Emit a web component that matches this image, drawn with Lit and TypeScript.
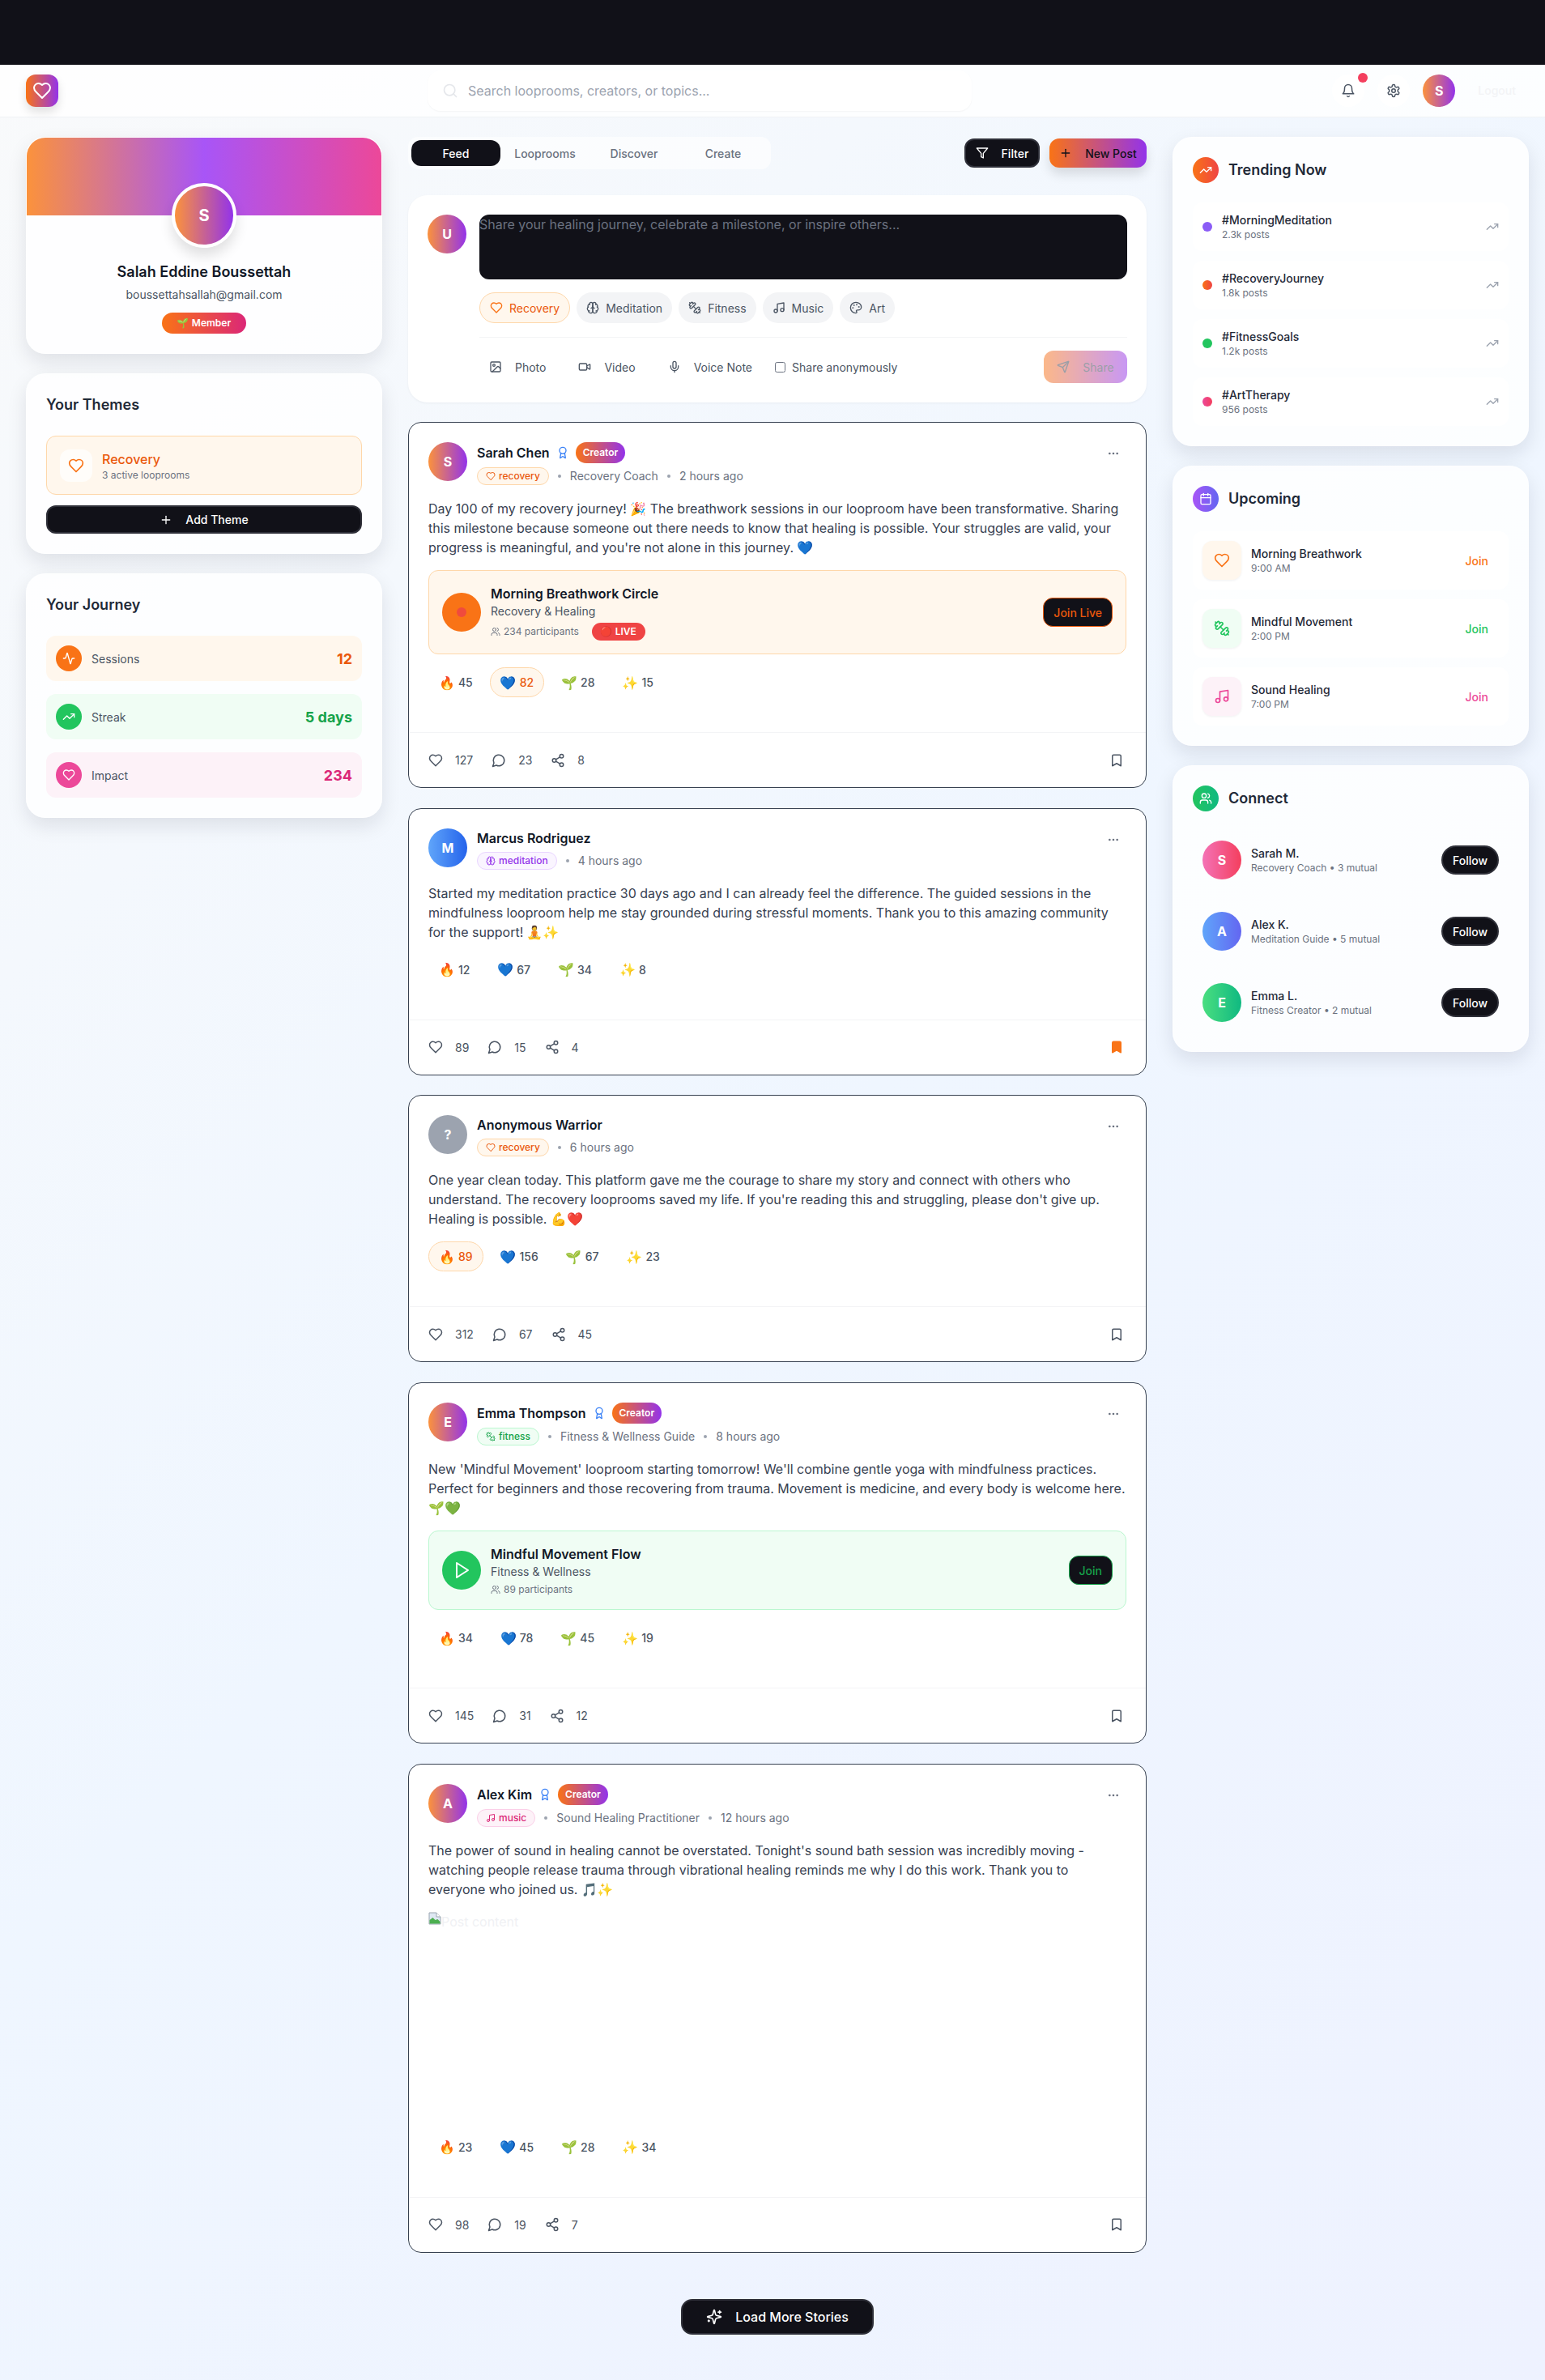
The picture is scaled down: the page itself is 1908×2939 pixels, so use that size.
import { LitElement, html, css, svg } from "lit";
import { customElement } from "lit/decorators.js";

const ICONS: Record<string, unknown> = {
  heart: svg`<path d="M19 14c1.49-1.46 3-3.21 3-5.5A5.5 5.5 0 0 0 16.5 3c-1.76 0-3 .5-4.5 2-1.5-1.5-2.74-2-4.5-2A5.5 5.5 0 0 0 2 8.5c0 2.3 1.5 4.05 3 5.5l7 7Z"/>`,
  brain: svg`<path d="M12 5a3 3 0 1 0-5.997.125 4 4 0 0 0-2.526 5.77 4 4 0 0 0 .556 6.588A4 4 0 1 0 12 18Z"/><path d="M12 5a3 3 0 1 1 5.997.125 4 4 0 0 1 2.526 5.77 4 4 0 0 1-.556 6.588A4 4 0 1 1 12 18Z"/><path d="M15 13a4.5 4.5 0 0 1-3-4 4.5 4.5 0 0 1-3 4"/><path d="M17.599 6.5a3 3 0 0 0 .399-1.375"/><path d="M6.003 5.125A3 3 0 0 0 6.401 6.5"/><path d="M3.477 10.896a4 4 0 0 1 .585-.396"/><path d="M19.938 10.5a4 4 0 0 1 .585.396"/><path d="M6 18a4 4 0 0 1-1.967-.516"/><path d="M19.967 17.484A4 4 0 0 1 18 18"/>`,
  dumbbell: svg`<path d="M14.4 14.4 9.6 9.6"/><path d="M18.657 21.485a2 2 0 1 1-2.829-2.828l-1.767 1.768a2 2 0 1 1-2.829-2.829l6.364-6.364a2 2 0 1 1 2.829 2.829l-1.768 1.767a2 2 0 1 1 2.828 2.829z"/><path d="m21.5 21.5-1.4-1.4"/><path d="M3.9 3.9 2.5 2.5"/><path d="M6.404 12.768a2 2 0 1 1-2.829-2.829l1.768-1.767a2 2 0 1 1-2.828-2.829l2.828-2.828a2 2 0 1 1 2.829 2.828l1.767-1.768a2 2 0 1 1 2.829 2.829z"/>`,
  music: svg`<path d="M9 18V5l12-2v13"/><circle cx="6" cy="18" r="3"/><circle cx="18" cy="16" r="3"/>`,
  palette: svg`<circle cx="13.5" cy="6.5" r=".5"/><circle cx="17.5" cy="10.5" r=".5"/><circle cx="8.5" cy="7.5" r=".5"/><circle cx="6.5" cy="12.5" r=".5"/><path d="M12 2C6.5 2 2 6.5 2 12s4.5 10 10 10c.926 0 1.648-.746 1.648-1.688 0-.437-.18-.835-.437-1.125-.29-.289-.438-.652-.438-1.125a1.64 1.64 0 0 1 1.668-1.668h1.996c3.051 0 5.555-2.503 5.555-5.554C21.965 6.012 17.461 2 12 2z"/>`,
  image: svg`<rect x="3" y="3" width="18" height="18" rx="2"/><circle cx="9" cy="9" r="2"/><path d="m21 15-3.086-3.086a2 2 0 0 0-2.828 0L6 21"/>`,
  video: svg`<path d="m16 13 5.223 3.482a.5.5 0 0 0 .777-.416V7.87a.5.5 0 0 0-.752-.432L16 10.5"/><rect x="2" y="6" width="14" height="12" rx="2"/>`,
  mic: svg`<path d="M12 2a3 3 0 0 0-3 3v7a3 3 0 0 0 6 0V5a3 3 0 0 0-3-3Z"/><path d="M19 10v2a7 7 0 0 1-14 0v-2"/><path d="M12 19v3"/>`,
  send: svg`<path d="M14.536 21.686a.5.5 0 0 0 .937-.024l6.5-19a.496.496 0 0 0-.635-.635l-19 6.5a.5.5 0 0 0-.024.937l7.93 3.18a2 2 0 0 1 1.112 1.11z"/><path d="m21.854 2.147-10.94 10.939"/>`,
  filter: svg`<polygon points="22 3 2 3 10 12.46 10 19 14 21 14 12.46 22 3"/>`,
  plus: svg`<path d="M5 12h14"/><path d="M12 5v14"/>`,
  search: svg`<circle cx="11" cy="11" r="8"/><path d="m21 21-4.3-4.3"/>`,
  bell: svg`<path d="M6 8a6 6 0 0 1 12 0c0 7 3 9 3 9H3s3-2 3-9"/><path d="M10.3 21a1.94 1.94 0 0 0 3.4 0"/>`,
  settings: svg`<path d="M12.22 2h-.44a2 2 0 0 0-2 2v.18a2 2 0 0 1-1 1.73l-.43.25a2 2 0 0 1-2 0l-.15-.08a2 2 0 0 0-2.73.73l-.22.38a2 2 0 0 0 .73 2.73l.15.1a2 2 0 0 1 1 1.72v.51a2 2 0 0 1-1 1.74l-.15.09a2 2 0 0 0-.73 2.73l.22.38a2 2 0 0 0 2.73.73l.15-.08a2 2 0 0 1 2 0l.43.25a2 2 0 0 1 1 1.73V20a2 2 0 0 0 2 2h.44a2 2 0 0 0 2-2v-.18a2 2 0 0 1 1-1.73l.43-.25a2 2 0 0 1 2 0l.15.08a2 2 0 0 0 2.73-.73l.22-.39a2 2 0 0 0-.73-2.73l-.15-.08a2 2 0 0 1-1-1.74v-.5a2 2 0 0 1 1-1.74l.15-.09a2 2 0 0 0 .73-2.73l-.22-.38a2 2 0 0 0-2.73-.73l-.15.08a2 2 0 0 1-2 0l-.43-.25a2 2 0 0 1-1-1.73V4a2 2 0 0 0-2-2z"/><circle cx="12" cy="12" r="3"/>`,
  trending: svg`<polyline points="22 7 13.5 15.5 8.5 10.5 2 17"/><polyline points="16 7 22 7 22 13"/>`,
  activity: svg`<path d="M22 12h-2.48a2 2 0 0 0-1.93 1.46l-2.35 8.36a.25.25 0 0 1-.48 0L9.24 2.18a.25.25 0 0 0-.48 0l-2.35 8.36A2 2 0 0 1 4.49 12H2"/>`,
  calendar: svg`<path d="M8 2v4"/><path d="M16 2v4"/><rect x="3" y="4" width="18" height="18" rx="2"/><path d="M3 10h18"/>`,
  users: svg`<path d="M16 21v-2a4 4 0 0 0-4-4H6a4 4 0 0 0-4 4v2"/><circle cx="9" cy="7" r="4"/><path d="M22 21v-2a4 4 0 0 0-3-3.87"/><path d="M16 3.13a4 4 0 0 1 0 7.75"/>`,
  award: svg`<path d="m15.477 12.89 1.515 8.526a.5.5 0 0 1-.81.47l-3.58-2.687a1 1 0 0 0-1.197 0l-3.586 2.686a.5.5 0 0 1-.81-.469l1.514-8.526"/><circle cx="12" cy="8" r="6"/>`,
  more: svg`<circle cx="12" cy="12" r="1"/><circle cx="19" cy="12" r="1"/><circle cx="5" cy="12" r="1"/>`,
  comment: svg`<path d="M7.9 20A9 9 0 1 0 4 16.1L2 22Z"/>`,
  share: svg`<circle cx="18" cy="5" r="3"/><circle cx="6" cy="12" r="3"/><circle cx="18" cy="19" r="3"/><path d="m8.59 13.51 6.83 3.98"/><path d="m15.41 6.51-6.82 3.98"/>`,
  bookmark: svg`<path d="m19 21-7-4-7 4V5a2 2 0 0 1 2-2h10a2 2 0 0 1 2 2v16z"/>`,
  play: svg`<polygon points="6 3 20 12 6 21 6 3"/>`,
  sparkles: svg`<path d="M9.937 15.5A2 2 0 0 0 8.5 14.063l-6.135-1.582a.5.5 0 0 1 0-.962L8.5 9.936A2 2 0 0 0 9.937 8.5l1.582-6.135a.5.5 0 0 1 .963 0L14.063 8.5A2 2 0 0 0 15.5 9.937l6.135 1.581a.5.5 0 0 1 0 .964L15.5 14.063a2 2 0 0 0-1.437 1.437l-1.582 6.135a.5.5 0 0 1-.963 0z"/><path d="M20 3v4"/><path d="M22 5h-4"/><path d="M4 17v2"/><path d="M5 18H3"/>`,
};

const icon = (name: string, size = 16, cls = "") => html`<svg class="ic ${cls}" width=${size} height=${size} viewBox="0 0 24 24" fill="none" stroke="currentColor" stroke-width="2" stroke-linecap="round" stroke-linejoin="round">${ICONS[name]}</svg>`;

const TAGS: Record<string, { tone: string; icon: string }> = {
  recovery: { tone: "orange", icon: "heart" },
  meditation: { tone: "purple", icon: "brain" },
  fitness: { tone: "green", icon: "dumbbell" },
  music: { tone: "pink", icon: "music" },
};

const POSTS = [
  {
    initial: "S", avatar: "grad", name: "Sarah Chen", creator: true, tag: "recovery", role: "Recovery Coach", time: "2 hours ago",
    text: "Day 100 of my recovery journey! 🎉 The breathwork sessions in our looproom have been transformative. Sharing this milestone because someone out there needs to know that healing is possible. Your struggles are valid, your progress is meaningful, and you're not alone in this journey. 💙",
    session: { tone: "orange", title: "Morning Breathwork Circle", sub: "Recovery & Healing", people: "234 participants", live: true, cta: "Join Live" },
    reactions: [45, 82, 28, 15], active: 1, stats: [127, 23, 8], saved: false,
  },
  {
    initial: "M", avatar: "blue", name: "Marcus Rodriguez", creator: false, tag: "meditation", role: "", time: "4 hours ago",
    text: "Started my meditation practice 30 days ago and I can already feel the difference. The guided sessions in the mindfulness looproom help me stay grounded during stressful moments. Thank you to this amazing community for the support! 🧘✨",
    reactions: [12, 67, 34, 8], active: -1, stats: [89, 15, 4], saved: true,
  },
  {
    initial: "?", avatar: "gray", name: "Anonymous Warrior", creator: false, tag: "recovery", role: "", time: "6 hours ago",
    text: "One year clean today. This platform gave me the courage to share my story and connect with others who understand. The recovery looprooms saved my life. If you're reading this and struggling, please don't give up. Healing is possible. 💪❤️",
    reactions: [89, 156, 67, 23], active: 0, stats: [312, 67, 45], saved: false,
  },
  {
    initial: "E", avatar: "grad", name: "Emma Thompson", creator: true, tag: "fitness", role: "Fitness & Wellness Guide", time: "8 hours ago",
    text: "New 'Mindful Movement' looproom starting tomorrow! We'll combine gentle yoga with mindfulness practices. Perfect for beginners and those recovering from trauma. Movement is medicine, and every body is welcome here. 🌱💚",
    session: { tone: "green", title: "Mindful Movement Flow", sub: "Fitness & Wellness", people: "89 participants", live: false, cta: "Join" },
    reactions: [34, 78, 45, 19], active: -1, stats: [145, 31, 12], saved: false,
  },
  {
    initial: "A", avatar: "grad", name: "Alex Kim", creator: true, tag: "music", role: "Sound Healing Practitioner", time: "12 hours ago",
    text: "The power of sound in healing cannot be overstated. Tonight's sound bath session was incredibly moving - watching people release trauma through vibrational healing reminds me why I do this work. Thank you to everyone who joined us. 🎵✨",
    broken: true,
    reactions: [23, 45, 28, 34], active: -1, stats: [98, 19, 7], saved: false,
  },
] as any[];

const REACTION_EMOJI = ["🔥", "💙", "🌱", "✨"];

const TRENDING = [
  { tag: "#MorningMeditation", posts: "2.3k posts", dot: "purple" },
  { tag: "#RecoveryJourney", posts: "1.8k posts", dot: "orange" },
  { tag: "#FitnessGoals", posts: "1.2k posts", dot: "green" },
  { tag: "#ArtTherapy", posts: "956 posts", dot: "pink" },
];

const UPCOMING = [
  { title: "Morning Breathwork", time: "9:00 AM", tone: "orange", icon: "heart" },
  { title: "Mindful Movement", time: "2:00 PM", tone: "green", icon: "dumbbell" },
  { title: "Sound Healing", time: "7:00 PM", tone: "pink", icon: "music" },
];

const PEOPLE = [
  { initial: "S", name: "Sarah M.", info: "Recovery Coach • 3 mutual", tone: "rose" },
  { initial: "A", name: "Alex K.", info: "Meditation Guide • 5 mutual", tone: "indigo" },
  { initial: "E", name: "Emma L.", info: "Fitness Creator • 2 mutual", tone: "emerald" },
];

@customElement("app-root")
export class AppRoot extends LitElement {
  static styles = css`
    :host {
      display: block;
      min-height: 100vh;
      font-family: Inter, "Noto Color Emoji", sans-serif;
      color: #111827;
      background: linear-gradient(135deg, #f9fafb 0%, #eff6ff 50%, #eef2ff 100%);
    }
    * {
      box-sizing: border-box;
    }
    .ic {
      flex: none;
      display: block;
    }
    button {
      font: inherit;
      cursor: pointer;
    }
    .topbar {
      height: 80px;
      background: #111118;
    }

    /* header */
    .header {
      height: 65px;
      display: flex;
      align-items: center;
      padding: 0 36px 0 32px;
      background: rgba(255, 255, 255, 0.8);
      border-bottom: 1px solid #f0f2f5;
    }
    .logo {
      width: 40px;
      height: 40px;
      border-radius: 12px;
      background: linear-gradient(90deg, #f97316, #9333ea);
      display: flex;
      align-items: center;
      justify-content: center;
      color: #fff;
      box-shadow: 0 6px 12px rgba(0, 0, 0, 0.12);
    }
    .search {
      margin-left: 456px;
      width: 672px;
      height: 50px;
      border-radius: 16px;
      background: #fff;
      box-shadow: 0 1px 2px rgba(0, 0, 0, 0.04);
      display: flex;
      align-items: center;
      gap: 12px;
      padding-left: 18px;
      color: #e5e7eb;
    }
    .search input {
      flex: 1;
      border: 0;
      outline: 0;
      background: transparent;
      font: 16px Inter, sans-serif;
      padding: 0;
    }
    .search input::placeholder {
      color: #9ca3af;
    }
    .head-right {
      margin-left: auto;
      display: flex;
      align-items: center;
      gap: 16px;
    }
    .round-btn {
      position: relative;
      width: 40px;
      height: 40px;
      border-radius: 50%;
      border: 0;
      background: #fff;
      color: #4b5563;
      display: flex;
      align-items: center;
      justify-content: center;
      padding: 0;
    }
    .notif {
      position: absolute;
      top: -2px;
      right: -4px;
      width: 12px;
      height: 12px;
      border-radius: 50%;
      background: #f43f5e;
    }
    .logout {
      margin-left: 12px;
      font-size: 14px;
      font-weight: 500;
      color: #f3f4f6;
      line-height: 20px;
    }

    /* page columns */
    .layout {
      width: 1888px;
      padding: 24px 0 56px 32px;
      display: grid;
      grid-template-columns: 440px 912px 440px;
      gap: 32px;
      align-items: start;
    }
    .col {
      display: flex;
      flex-direction: column;
      gap: 24px;
    }
    .card {
      background: rgba(255, 255, 255, 0.82);
      border: 1px solid rgba(255, 255, 255, 0.5);
      border-radius: 24px;
      padding: 24px;
      box-shadow: 0 10px 24px rgba(15, 23, 42, 0.1);
    }
    .card h3 {
      margin: 0 0 24px;
      font-size: 18px;
      line-height: 28px;
      font-weight: 600;
      color: #1f2937;
    }
    .card-head {
      display: flex;
      align-items: center;
      gap: 12px;
      margin-bottom: 24px;
    }
    .card-head h3 {
      margin: 0;
    }
    .head-ic {
      width: 32px;
      height: 32px;
      border-radius: 50%;
      color: #fff;
      display: flex;
      align-items: center;
      justify-content: center;
    }
    .head-ic.fire {
      background: linear-gradient(90deg, #f97316, #ef4444);
    }
    .head-ic.violet {
      background: linear-gradient(90deg, #a855f7, #6366f1);
    }
    .head-ic.leaf {
      background: linear-gradient(90deg, #22c55e, #10b981);
    }

    /* profile */
    .profile {
      padding: 0 0 24px;
      text-align: center;
      overflow: hidden;
    }
    .banner {
      height: 96px;
      background: linear-gradient(90deg, #fb923c, #a855f7, #ec4899);
    }
    .profile-av {
      width: 80px;
      height: 80px;
      margin: -40px auto 0;
      border: 4px solid #fff;
      border-radius: 50%;
      background: linear-gradient(90deg, #fb923c, #9333ea);
      color: #fff;
      font-size: 20px;
      font-weight: 700;
      display: flex;
      align-items: center;
      justify-content: center;
      box-shadow: 0 10px 16px rgba(0, 0, 0, 0.12);
      position: relative;
    }
    .profile-name {
      margin-top: 16px;
      font-size: 18px;
      line-height: 28px;
      font-weight: 600;
      color: #111827;
    }
    .profile-mail {
      margin-top: 4px;
      font-size: 14px;
      line-height: 20px;
      color: #4b5563;
    }
    .member {
      display: inline-block;
      margin-top: 12px;
      height: 26px;
      padding: 0 19px;
      line-height: 26px;
      border-radius: 999px;
      font-size: 12px;
      font-weight: 600;
      color: #fff;
      background: linear-gradient(90deg, #f97316, #db2777);
      vertical-align: top;
    }

    /* themes */
    .theme {
      height: 73px;
      display: flex;
      align-items: center;
      gap: 12px;
      padding: 0 16px;
      border-radius: 12px;
      background: #fff7ed;
      border: 1px solid #fed7aa;
    }
    .theme-ic {
      width: 40px;
      height: 40px;
      border-radius: 12px;
      background: rgba(255, 255, 255, 0.7);
      color: #f97316;
      display: flex;
      align-items: center;
      justify-content: center;
    }
    .theme-name {
      font-size: 16px;
      line-height: 24px;
      font-weight: 500;
      color: #ea580c;
    }
    .theme-sub {
      font-size: 12px;
      line-height: 16px;
      color: #6b7280;
    }
    .dark-btn {
      background: #111118;
      color: #fff;
      border: 2px solid #2e2f38;
      font-size: 14px;
      font-weight: 500;
      display: flex;
      align-items: center;
      justify-content: center;
    }
    .add-theme {
      width: 100%;
      height: 35px;
      margin-top: 13px;
      border-radius: 12px;
      gap: 16px;
    }

    /* journey */
    .stats {
      display: flex;
      flex-direction: column;
      gap: 16px;
    }
    .stat {
      height: 56px;
      border-radius: 12px;
      padding: 0 12px;
      display: flex;
      align-items: center;
      gap: 12px;
      font-size: 14px;
      color: #4b5563;
    }
    .stat-ic {
      width: 32px;
      height: 32px;
      border-radius: 50%;
      color: #fff;
      display: flex;
      align-items: center;
      justify-content: center;
    }
    .stat-val {
      margin-left: auto;
      font-size: 18px;
      font-weight: 700;
    }
    .stat.orange {
      background: #fff7ed;
    }
    .stat.orange .stat-ic {
      background: #f97316;
    }
    .stat.orange .stat-val {
      color: #ea580c;
    }
    .stat.green {
      background: #f0fdf4;
    }
    .stat.green .stat-ic {
      background: #22c55e;
    }
    .stat.green .stat-val {
      color: #16a34a;
    }
    .stat.pink {
      background: #fdf2f8;
    }
    .stat.pink .stat-ic {
      background: #ec4899;
    }
    .stat.pink .stat-val {
      color: #db2777;
    }

    /* feed controls */
    .feed-top {
      display: flex;
      justify-content: space-between;
      align-items: center;
      height: 40px;
      margin-bottom: 32px;
    }
    .tabs {
      display: flex;
      padding: 4px;
      border-radius: 12px;
      background: rgba(255, 255, 255, 0.6);
    }
    .tab {
      width: 110px;
      height: 32px;
      border-radius: 12px;
      font-size: 14px;
      font-weight: 500;
      color: #6b7280;
      display: flex;
      align-items: center;
      justify-content: center;
    }
    .tab.on {
      background: #111118;
      color: #fff;
    }
    .feed-actions {
      display: flex;
      gap: 12px;
    }
    .filter {
      height: 36px;
      width: 93px;
      border-radius: 12px;
      gap: 16px;
    }
    .new-post {
      height: 36px;
      width: 120px;
      border: 0;
      border-radius: 12px;
      background: linear-gradient(90deg, #f97316, #9333ea);
      color: #111118;
      font-size: 14px;
      font-weight: 500;
      display: flex;
      align-items: center;
      justify-content: center;
      gap: 16px;
      box-shadow: 0 8px 14px rgba(0, 0, 0, 0.12);
    }

    /* composer */
    .composer {
      display: flex;
      gap: 16px;
      padding: 24px;
      background: #fff;
      border-radius: 24px;
      box-shadow: 0 1px 3px rgba(15, 23, 42, 0.05);
      margin-bottom: 24px;
    }
    .av {
      width: 48px;
      height: 48px;
      border-radius: 50%;
      flex: none;
      color: #fff;
      font-weight: 700;
      font-size: 16px;
      display: flex;
      align-items: center;
      justify-content: center;
    }
    .av.small {
      width: 40px;
      height: 40px;
    }
    .av.grad {
      background: linear-gradient(90deg, #fb923c, #9333ea);
    }
    .av.blue {
      background: linear-gradient(90deg, #60a5fa, #2563eb);
    }
    .av.gray {
      background: #9ca3af;
    }
    .av.rose {
      background: linear-gradient(90deg, #f472b6, #f43f5e);
    }
    .av.indigo {
      background: linear-gradient(90deg, #60a5fa, #6366f1);
    }
    .av.emerald {
      background: linear-gradient(90deg, #4ade80, #10b981);
    }
    .composer-main {
      flex: 1;
      min-width: 0;
    }
    textarea {
      display: block;
      width: 100%;
      height: 80px;
      resize: none;
      padding: 0;
      border: 0;
      outline: 0;
      border-radius: 12px;
      background: #111118;
      color: #fff;
      font: 16px/24px Inter, sans-serif;
    }
    textarea::placeholder {
      color: #6b7280;
    }
    .chips {
      display: flex;
      gap: 8px;
      margin-top: 16px;
      padding-bottom: 17px;
      border-bottom: 1px solid #f3f4f6;
    }
    .chip {
      height: 38px;
      padding: 0 12px;
      border-radius: 999px;
      background: #f3f4f6;
      color: #4b5563;
      font-size: 14px;
      display: flex;
      align-items: center;
      gap: 8px;
    }
    .chip.on {
      background: #fff7ed;
      border: 1px solid #fed7aa;
      color: #ea580c;
    }
    .chip.on .ic {
      color: #f97316;
    }
    .composer-foot {
      display: flex;
      align-items: center;
      margin-top: 16px;
      height: 40px;
      font-size: 14px;
      color: #4b5563;
    }
    .attach {
      display: flex;
      align-items: center;
      gap: 16px;
      padding: 0 12px;
      margin-right: 16px;
    }
    .anon {
      display: flex;
      align-items: center;
      gap: 8px;
    }
    .box {
      width: 13px;
      height: 13px;
      border: 1px solid #6b7280;
      border-radius: 2.5px;
      background: #fff;
    }
    .share-btn {
      margin-left: auto;
      width: 103px;
      height: 40px;
      border: 0;
      border-radius: 12px;
      background: linear-gradient(90deg, #f97316, #9333ea);
      opacity: 0.5;
      color: #374151;
      font-size: 14px;
      display: flex;
      align-items: center;
      justify-content: center;
      gap: 16px;
    }

    /* posts */
    .posts {
      display: flex;
      flex-direction: column;
      gap: 24.7px;
    }
    .post {
      background: #fff;
      border: 1px solid #374151;
      border-radius: 16px;
    }
    .post-body {
      padding: 24px 24px 0;
    }
    .post-head {
      display: flex;
      gap: 12px;
      margin-bottom: 17px;
    }
    .who {
      flex: 1;
      min-width: 0;
    }
    .who-top {
      display: flex;
      align-items: center;
      gap: 8px;
      min-height: 24px;
      font-size: 16px;
      line-height: 24px;
      font-weight: 600;
      color: #111827;
      margin-bottom: 5px;
    }
    .who-top .ic {
      color: #3b82f6;
    }
    .creator {
      height: 26px;
      line-height: 26px;
      padding: 0 9px;
      border-radius: 999px;
      background: linear-gradient(90deg, #f97316, #9333ea);
      color: #fff;
      font-size: 12px;
      font-weight: 600;
    }
    .who-sub {
      display: flex;
      align-items: center;
      gap: 11px;
      font-size: 14px;
      line-height: 20px;
      color: #6b7280;
    }
    .dot {
      width: 4px;
      height: 4px;
      border-radius: 50%;
      background: #9ca3af;
    }
    .tag {
      height: 22px;
      padding: 0 10px;
      border: 1px solid;
      border-radius: 999px;
      font-size: 12px;
      font-weight: 500;
      display: flex;
      align-items: center;
      gap: 4px;
    }
    .tag.orange {
      background: #fff7ed;
      color: #ea580c;
      border-color: #fed7aa;
    }
    .tag.purple {
      background: #faf5ff;
      color: #9333ea;
      border-color: #e9d5ff;
    }
    .tag.green {
      background: #f0fdf4;
      color: #16a34a;
      border-color: #bbf7d0;
    }
    .tag.pink {
      background: #fdf2f8;
      color: #db2777;
      border-color: #fbcfe8;
    }
    .post-more {
      align-self: flex-start;
      margin-top: 6px;
      margin-right: 4px;
      width: 24px;
      display: flex;
      justify-content: center;
      color: #6b7280;
    }
    .post-text {
      margin: 0;
      font-size: 16px;
      line-height: 24px;
      color: #374151;
    }
    .session {
      margin-top: 16px;
      margin-bottom: 1px;
      padding: 16px;
      border: 1px solid;
      border-radius: 12px;
      display: flex;
      align-items: center;
      gap: 12px;
    }
    .session.orange {
      background: #fff7ed;
      border-color: #fed7aa;
    }
    .session.green {
      background: #f0fdf4;
      border-color: #bbf7d0;
    }
    .session-ic {
      width: 48px;
      height: 48px;
      border-radius: 50%;
      flex: none;
      color: #fff;
      display: flex;
      align-items: center;
      justify-content: center;
    }
    .session.orange .session-ic {
      background: #f97316;
    }
    .session.green .session-ic {
      background: #22c55e;
    }
    .pulse {
      width: 12px;
      height: 12px;
      border-radius: 50%;
      background: #ef4444;
      opacity: 0.85;
    }
    .session-info {
      flex: 1;
      min-width: 0;
    }
    .session-title {
      font-size: 16px;
      line-height: 24px;
      font-weight: 600;
      color: #111827;
    }
    .session-sub {
      font-size: 14px;
      line-height: 20px;
      color: #4b5563;
    }
    .session-meta {
      margin-top: 4px;
      display: flex;
      align-items: center;
      gap: 16px;
      font-size: 12px;
      line-height: 16px;
      color: #6b7280;
    }
    .people {
      display: flex;
      align-items: center;
      gap: 4px;
    }
    .live {
      height: 22px;
      width: 66px;
      border-radius: 999px;
      background: #ef4444;
      color: #fff;
      font-weight: 600;
      display: flex;
      align-items: center;
      justify-content: center;
      gap: 2px;
    }
    .session-cta {
      height: 36px;
      padding: 0 12px;
      border-radius: 12px;
      background: #111118;
      border: 1px solid;
      font-size: 14px;
      font-weight: 500;
    }
    .session.orange .session-cta {
      color: #ea580c;
      border-color: #ea580c;
    }
    .session.green .session-cta {
      color: #16a34a;
      border-color: #16a34a;
    }
    .broken {
      margin-top: 16px;
      height: 256px;
      display: flex;
      align-items: flex-start;
      font-size: 16px;
      line-height: 24px;
      color: #f0f1f4;
    }
    .broken svg {
      flex: none;
    }
    .reactions {
      display: flex;
      gap: 8px;
      margin-top: 16px;
      margin-bottom: 43px;
    }
    .reaction {
      height: 37px;
      padding: 0 12px;
      border: 1px solid transparent;
      border-radius: 999px;
      display: flex;
      align-items: center;
      gap: 4px;
      font-size: 14px;
      font-weight: 500;
      color: #4b5563;
    }
    .reaction .em {
      font-size: 16px;
    }
    .reaction.on {
      background: #fff7ed;
      border-color: #fed7aa;
      color: #ea580c;
    }
    .post-foot {
      height: 68px;
      padding: 0 24px;
      border-top: 1px solid #f3f4f6;
      display: flex;
      align-items: center;
      gap: 23px;
      font-size: 14px;
      color: #4b5563;
    }
    .foot-item {
      display: flex;
      align-items: center;
      gap: 15px;
    }
    .foot-save {
      margin-left: auto;
      margin-right: 3px;
      color: #4b5563;
    }
    .foot-save.on {
      color: #f97316;
    }
    .foot-save.on path {
      fill: #f97316;
    }
    .load-wrap {
      display: flex;
      justify-content: center;
      margin-top: 57px;
    }
    .load {
      width: 238px;
      height: 44px;
      border-radius: 14px;
      font-size: 16px;
      gap: 16px;
    }

    /* right column */
    .rows {
      display: flex;
      flex-direction: column;
      gap: 12px;
    }
    .row {
      display: flex;
      align-items: center;
      gap: 12px;
      padding: 0 12px;
      border-radius: 12px;
      background: #fff;
    }
    .row.trend {
      height: 60px;
    }
    .row.event {
      height: 72px;
    }
    .row-main {
      flex: 1;
      min-width: 0;
    }
    .row-title {
      font-size: 14px;
      line-height: 20px;
      font-weight: 500;
      color: #1f2937;
    }
    .row-sub {
      font-size: 12px;
      line-height: 16px;
      color: #6b7280;
    }
    .trend-dot {
      width: 12px;
      height: 12px;
      border-radius: 50%;
    }
    .trend-dot.purple {
      background: #8b5cf6;
    }
    .trend-dot.orange {
      background: linear-gradient(90deg, #f97316, #ef4444);
    }
    .trend-dot.green {
      background: #22c55e;
    }
    .trend-dot.pink {
      background: linear-gradient(90deg, #ec4899, #f43f5e);
    }
    .row.trend > .ic {
      color: #9ca3af;
    }
    .ev-ic {
      width: 48px;
      height: 48px;
      border-radius: 12px;
      display: flex;
      align-items: center;
      justify-content: center;
      box-shadow: 0 1px 3px rgba(0, 0, 0, 0.06);
    }
    .ev-ic.orange {
      background: #fff7ed;
      color: #f97316;
    }
    .ev-ic.green {
      background: #f0fdf4;
      color: #22c55e;
    }
    .ev-ic.pink {
      background: #fdf2f8;
      color: #ec4899;
    }
    .ev-join {
      font-size: 14px;
      font-weight: 500;
      padding-right: 13px;
    }
    .ev-join.orange {
      color: #f97316;
    }
    .ev-join.green {
      color: #22c55e;
    }
    .ev-join.pink {
      color: #ec4899;
    }
    .people-rows {
      display: flex;
      flex-direction: column;
      gap: 16px;
    }
    .person {
      height: 72px;
      padding: 0 12px;
      display: flex;
      align-items: center;
      gap: 12px;
    }
    .follow {
      width: 71px;
      height: 36px;
      border-radius: 999px;
    }
  `;

  renderPost(p: any) {
    const tag = TAGS[p.tag];
    return html`
      <article class="post">
        <div class="post-body">
          <div class="post-head">
            <div class="av ${p.avatar}">${p.initial}</div>
            <div class="who">
              <div class="who-top">
                ${p.name}
                ${p.creator ? html`${icon("award", 16)}<span class="creator">Creator</span>` : ""}
              </div>
              <div class="who-sub">
                <span class="tag ${tag.tone}">${icon(tag.icon, 12)}${p.tag}</span>
                ${p.role ? html`<span class="dot"></span><span>${p.role}</span>` : ""}
                <span class="dot"></span><span>${p.time}</span>
              </div>
            </div>
            <div class="post-more">${icon("more", 16)}</div>
          </div>
          <p class="post-text">${p.text}</p>
          ${p.session ? this.renderSession(p.session) : ""}
          ${p.broken
            ? html`<div class="broken">
                <svg width="16" height="16" viewBox="0 0 16 16"><path d="M1 1h9l5 5v9H1z" fill="#dfe8f3" stroke="#9aa5b1" stroke-width="1"/><path d="M1.5 14.5V10l4-3 3 3 3-1 3 3v2.500z" fill="#4caf50"/><path d="M10 1v5h5" fill="#fff" stroke="#9aa5b1" stroke-width="1"/></svg>
                <span>Post content</span>
              </div>`
            : ""}
          <div class="reactions">
            ${p.reactions.map(
              (n: number, i: number) => html`<span class="reaction ${i === p.active ? "on" : ""}"><span class="em">${REACTION_EMOJI[i]}</span>${n}</span>`
            )}
          </div>
        </div>
        <div class="post-foot">
          <span class="foot-item">${icon("heart", 18)}${p.stats[0]}</span>
          <span class="foot-item">${icon("comment", 18)}${p.stats[1]}</span>
          <span class="foot-item">${icon("share", 18)}${p.stats[2]}</span>
          <span class="foot-save ${p.saved ? "on" : ""}">${icon("bookmark", 18)}</span>
        </div>
      </article>
    `;
  }

  renderSession(s: any) {
    return html`
      <div class="session ${s.tone}">
        <div class="session-ic">${s.live ? html`<span class="pulse"></span>` : icon("play", 24)}</div>
        <div class="session-info">
          <div class="session-title">${s.title}</div>
          <div class="session-sub">${s.sub}</div>
          <div class="session-meta">
            <span class="people">${icon("users", 12)}${s.people}</span>
            ${s.live ? html`<span class="live">🔴 LIVE</span>` : ""}
          </div>
        </div>
        <button class="session-cta">${s.cta}</button>
      </div>
    `;
  }

  render() {
    return html`
      <div class="topbar"></div>
      <header class="header">
        <div class="logo">${icon("heart", 24)}</div>
        <div class="search">
          ${icon("search", 20)}
          <input placeholder="Search looprooms, creators, or topics..." />
        </div>
        <div class="head-right">
          <button class="round-btn">${icon("bell", 18)}<span class="notif"></span></button>
          <button class="round-btn">${icon("settings", 18)}</button>
          <div class="av grad small">S</div>
          <span class="logout">Logout</span>
        </div>
      </header>

      <div class="layout">
        <aside class="col">
          <section class="card profile">
            <div class="banner"></div>
            <div class="profile-av">S</div>
            <div class="profile-name">Salah Eddine Boussettah</div>
            <div class="profile-mail">boussettahsallah@gmail.com</div>
            <span class="member">🌱 Member</span>
          </section>
          <section class="card">
            <h3>Your Themes</h3>
            <div class="theme">
              <div class="theme-ic">${icon("heart", 20)}</div>
              <div>
                <div class="theme-name">Recovery</div>
                <div class="theme-sub">3 active looprooms</div>
              </div>
            </div>
            <button class="dark-btn add-theme">${icon("plus", 16)}Add Theme</button>
          </section>
          <section class="card">
            <h3>Your Journey</h3>
            <div class="stats">
              <div class="stat orange"><span class="stat-ic">${icon("activity", 16)}</span>Sessions<span class="stat-val">12</span></div>
              <div class="stat green"><span class="stat-ic">${icon("trending", 16)}</span>Streak<span class="stat-val">5 days</span></div>
              <div class="stat pink"><span class="stat-ic">${icon("heart", 16)}</span>Impact<span class="stat-val">234</span></div>
            </div>
          </section>
        </aside>

        <main>
          <div class="feed-top">
            <div class="tabs">
              <span class="tab on">Feed</span>
              <span class="tab">Looprooms</span>
              <span class="tab">Discover</span>
              <span class="tab">Create</span>
            </div>
            <div class="feed-actions">
              <button class="dark-btn filter">${icon("filter", 16)}Filter</button>
              <button class="new-post">${icon("plus", 16)}New Post</button>
            </div>
          </div>

          <section class="composer">
            <div class="av grad">U</div>
            <div class="composer-main">
              <textarea placeholder="Share your healing journey, celebrate a milestone, or inspire others..."></textarea>
              <div class="chips">
                <span class="chip on">${icon("heart", 16)}Recovery</span>
                <span class="chip">${icon("brain", 16)}Meditation</span>
                <span class="chip">${icon("dumbbell", 16)}Fitness</span>
                <span class="chip">${icon("music", 16)}Music</span>
                <span class="chip">${icon("palette", 16)}Art</span>
              </div>
              <div class="composer-foot">
                <span class="attach">${icon("image", 16)}Photo</span>
                <span class="attach">${icon("video", 16)}Video</span>
                <span class="attach">${icon("mic", 16)}Voice Note</span>
                <span class="anon"><span class="box"></span>Share anonymously</span>
                <button class="share-btn">${icon("send", 16)}Share</button>
              </div>
            </div>
          </section>

          <div class="posts">${POSTS.map((p) => this.renderPost(p))}</div>

          <div class="load-wrap">
            <button class="dark-btn load">${icon("sparkles", 20)}Load More Stories</button>
          </div>
        </main>

        <aside class="col">
          <section class="card">
            <div class="card-head"><span class="head-ic fire">${icon("trending", 16)}</span><h3>Trending Now</h3></div>
            <div class="rows">
              ${TRENDING.map(
                (t) => html`<div class="row trend">
                  <span class="trend-dot ${t.dot}"></span>
                  <div class="row-main">
                    <div class="row-title">${t.tag}</div>
                    <div class="row-sub">${t.posts}</div>
                  </div>
                  ${icon("trending", 16)}
                </div>`
              )}
            </div>
          </section>
          <section class="card">
            <div class="card-head"><span class="head-ic violet">${icon("calendar", 16)}</span><h3>Upcoming</h3></div>
            <div class="rows">
              ${UPCOMING.map(
                (e) => html`<div class="row event">
                  <span class="ev-ic ${e.tone}">${icon(e.icon, 20)}</span>
                  <div class="row-main">
                    <div class="row-title">${e.title}</div>
                    <div class="row-sub">${e.time}</div>
                  </div>
                  <span class="ev-join ${e.tone}">Join</span>
                </div>`
              )}
            </div>
          </section>
          <section class="card">
            <div class="card-head"><span class="head-ic leaf">${icon("users", 16)}</span><h3>Connect</h3></div>
            <div class="people-rows">
              ${PEOPLE.map(
                (p) => html`<div class="person">
                  <div class="av ${p.tone}">${p.initial}</div>
                  <div class="row-main">
                    <div class="row-title">${p.name}</div>
                    <div class="row-sub">${p.info}</div>
                  </div>
                  <button class="dark-btn follow">Follow</button>
                </div>`
              )}
            </div>
          </section>
        </aside>
      </div>
    `;
  }
}
